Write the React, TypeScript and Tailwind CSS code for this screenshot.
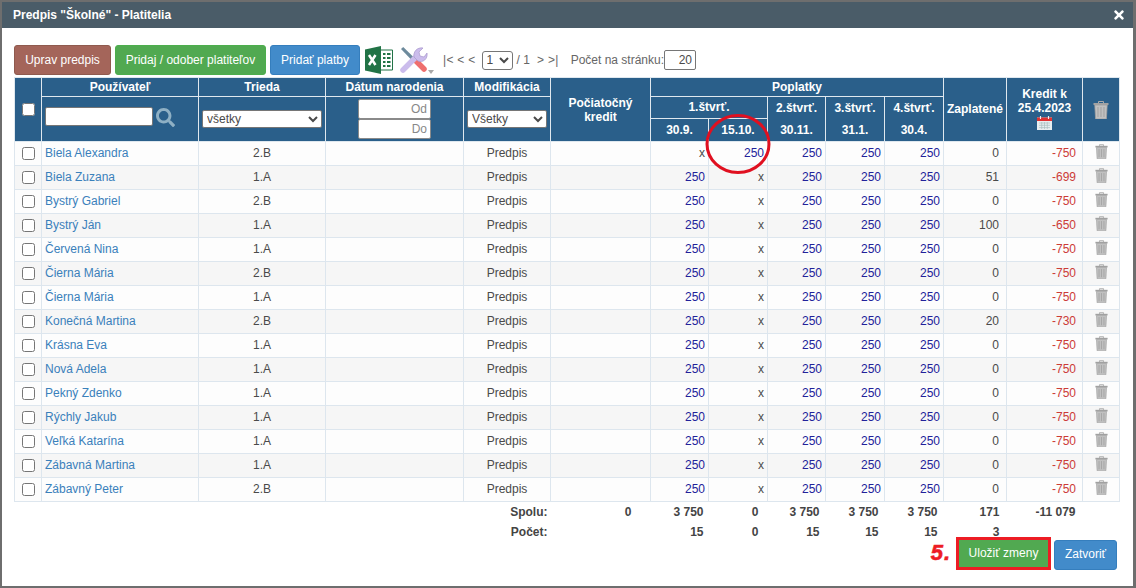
import { FaSearch, FaTimes } from "react-icons/fa";

const rows = [
  { name: "Biela Alexandra", cls: "2.B", paid: "0", credit: "-750", swap: true },
  { name: "Biela Zuzana", cls: "1.A", paid: "51", credit: "-699" },
  { name: "Bystrý Gabriel", cls: "2.B", paid: "0", credit: "-750" },
  { name: "Bystrý Ján", cls: "1.A", paid: "100", credit: "-650" },
  { name: "Červená Nina", cls: "1.A", paid: "0", credit: "-750" },
  { name: "Čierna Mária", cls: "2.B", paid: "0", credit: "-750" },
  { name: "Čierna Mária", cls: "1.A", paid: "0", credit: "-750" },
  { name: "Konečná Martina", cls: "2.B", paid: "20", credit: "-730" },
  { name: "Krásna Eva", cls: "1.A", paid: "0", credit: "-750" },
  { name: "Nová Adela", cls: "1.A", paid: "0", credit: "-750" },
  { name: "Pekný Zdenko", cls: "1.A", paid: "0", credit: "-750" },
  { name: "Rýchly Jakub", cls: "1.A", paid: "0", credit: "-750" },
  { name: "Veľká Katarína", cls: "1.A", paid: "0", credit: "-750" },
  { name: "Zábavná Martina", cls: "1.A", paid: "0", credit: "-750" },
  { name: "Zábavný Peter", cls: "2.B", paid: "0", credit: "-750" },
];

const colWidths = [27, 157, 127, 138, 87, 100, 58, 59, 58, 59, 59, 63, 76, 37];

const TrashIcon = ({ className }: { className: string }) => (
  <svg viewBox="0 0 16 18" className={className}>
    <path d="M5.5 0.5h5v2h-5z" fill="none" stroke="#aaa" />
    <rect x="0.5" y="2" width="15" height="2" fill="#a2a2a2" />
    <path d="M1.8 4h12.4l-0.8 14H2.6z" fill="#c0c0c0" />
    <path d="M1.8 4h12.4l-0.8 14H2.6z" fill="none" stroke="#a0a0a0" strokeWidth="0.8" />
    <path d="M5 6v10M8 6v10M11 6v10" stroke="#a4a4a4" strokeWidth="1.1" />
  </svg>
);

const CalendarIcon = () => (
  <svg viewBox="0 0 15 14" className="w-[15px] h-[14px]">
    <rect x="0" y="1.5" width="15" height="12.5" fill="#e8eef0" />
    <rect x="0" y="1.5" width="15" height="3.5" fill="#e03131" />
    <path d="M3.5 0v3M11.5 0v3" stroke="#f3f3f3" strokeWidth="1.1" />
    <path d="M2 7h11M2 9.3h11M2 11.6h11M4.7 6v7M7.5 6v7M10.3 6v7" stroke="#a9c0c0" strokeWidth="0.7" />
  </svg>
);

const ExcelIcon = () => (
  <svg viewBox="0 0 28 28" className="w-[28px] h-[28px]">
    <path d="M13 4h14.5v20H13z" fill="#fff" stroke="#217346" strokeWidth="1" />
    <path d="M18 8h2.5M22 8h3.5M18 12h2.5M22 12h3.5M18 16h2.5M22 16h3.5M18 20h2.5M22 20h3.5" stroke="#217346" strokeWidth="1.8" />
    <path d="M0 3.5 16 0v28L0 24.5z" fill="#217346" />
    <path d="M4 9l6.5 10M10.5 9 4 19" stroke="#fff" strokeWidth="2.5" />
  </svg>
);

const ToolsIcon = () => (
  <svg viewBox="0 0 35 29" className="w-[35px] h-[29px]">
    <path d="M2 3l2.2-2L16 12.5l-2.5 2.5z" fill="#6d8a9c" />
    <path d="M16 14l9 9" stroke="#ee6f6e" strokeWidth="5.5" strokeLinecap="round" />
    <path d="M4 24 17 11" stroke="#cbbcec" strokeWidth="5.5" strokeLinecap="round" />
    <path d="M15 11c-1-5 3-10 9-9l-4 4 1 4 4 1 3-4c1 6-4 10-9 8z" fill="#cbbcec" stroke="#a796cb" strokeWidth="0.7" />
    <path d="M29 24h6l-3 4z" fill="#a8a8a8" />
  </svg>
);

const headCell = "border border-[#dfe8ef] font-bold text-white text-center p-0 align-middle";
const cell = "border border-[#dde6ee] p-0 align-middle";
const blue = "text-[#22229a]";

export default function App() {
  return (
    <div className="relative w-[1136px] h-[588px] overflow-hidden bg-[#6e6e6e] pt-[2px] pb-[2px] pl-[2px] pr-[3px] text-[12px] leading-[17px] text-[#4a4a4a] font-['Liberation_Sans',Arial,sans-serif]">
      <div className="h-full flex flex-col bg-white">
        <div className="h-[26px] shrink-0 flex items-center justify-between pl-[11px] pr-[7px] bg-[#4a5c68] text-white font-bold">
          <span>Predpis "Školné" - Platitelia</span>
          <FaTimes className="w-[14px] h-[14px]" />
        </div>

        <div className="pt-[17px] pl-[12px] pr-[14px]">
          <div className="flex items-center h-[30px]">
            <button className="h-[30px] w-[97px] rounded-[3px] border border-[#8f5a4e] bg-[#a4655a] text-white">Uprav predpis</button>
            <button className="ml-[4px] h-[30px] w-[151px] rounded-[3px] border border-[#4cae4c] bg-[#51a951] text-white">Pridaj / odober platiteľov</button>
            <button className="ml-[4px] h-[30px] w-[90px] rounded-[3px] border border-[#357ebd] bg-[#428bca] text-white">Pridať platby</button>
            <span className="ml-[5px]"><ExcelIcon /></span>
            <span className="ml-[6px]"><ToolsIcon /></span>
            <span className="ml-[9px] text-[#666] tracking-[0.3px]">|&lt; &lt; &lt;</span>
            <select className="ml-[6px] w-[31px] h-[19px] bg-white border border-[#767676] rounded-[3px] text-[12px]">
              <option>1</option>
            </select>
            <span className="ml-[4px] text-[#666]">/ 1</span>
            <span className="ml-[7px] text-[#666] tracking-[0.3px]">&gt; &gt;|</span>
            <span className="ml-[12px] text-[#666]">Počet na stránku:</span>
            <input readOnly value="20" className="w-[32px] h-[20px] border border-[#767676] rounded-[2px] text-right pr-[3px] text-[12px]" />
          </div>

          <table className="mt-[2px] w-[1105px] table-fixed border-collapse">
            <colgroup>
              {colWidths.map((w, i) => (
                <col key={i} style={{ width: w }} />
              ))}
            </colgroup>
            <thead className="bg-[#2a5f8a]">
              <tr className="h-[19px]">
                <th rowSpan={3} className={headCell}>
                  <input type="checkbox" className="block mx-auto" />
                </th>
                <th className={headCell}>Používateľ</th>
                <th className={headCell}>Trieda</th>
                <th className={headCell}>Dátum narodenia</th>
                <th className={headCell}>Modifikácia</th>
                <th rowSpan={3} className={headCell}><div className="leading-[14px]">Počiatočný<br />kredit</div></th>
                <th colSpan={5} className={headCell}>Poplatky</th>
                <th rowSpan={3} className={headCell}>Zaplatené</th>
                <th rowSpan={3} className={headCell}>
                  <div className="leading-[14px]">Kredit k<br />25.4.2023</div>
                  <div className="flex justify-center mt-[1px] mb-[3px]"><CalendarIcon /></div>
                </th>
                <th rowSpan={3} className={headCell}>
                  <TrashIcon className="block mx-auto w-[16px] h-[18px]" />
                </th>
              </tr>
              <tr className="h-[22px]">
                <th rowSpan={2} className={headCell}>
                  <div className="flex items-center pl-[3px] mb-[6px]">
                    <input className="w-[108px] h-[19px] bg-white border border-[#767676] rounded-[2px]" />
                    <FaSearch className="ml-[3px] w-[19px] h-[19px] mt-[3px] text-[#8fb0c4]" />
                  </div>
                </th>
                <th rowSpan={2} className={headCell}>
                  <select className="w-[120px] h-[18px] bg-white border border-[#767676] rounded-[2px] text-[12px] font-normal text-[#4a4a4a]">
                    <option>všetky</option>
                  </select>
                </th>
                <th rowSpan={2} className={headCell}>
                  <div className="flex flex-col items-center">
                    <input readOnly placeholder="Od" className="w-[73px] h-[20px] bg-white border border-[#8a8a8a] text-right pr-[3px] rounded-[2px] text-[12px] font-normal placeholder:text-[#888]" />
                    <input readOnly placeholder="Do" className="w-[73px] h-[20px] bg-white border border-[#8a8a8a] text-right pr-[3px] rounded-[2px] text-[12px] font-normal placeholder:text-[#888]" />
                  </div>
                </th>
                <th rowSpan={2} className={headCell}>
                  <select className="w-[80px] h-[18px] bg-white border border-[#767676] rounded-[2px] text-[12px] font-normal text-[#4a4a4a]">
                    <option>Všetky</option>
                  </select>
                </th>
                <th colSpan={2} className={headCell}>1.štvrť.</th>
                <th rowSpan={2} className={headCell}><div className="leading-[22px]">2.štvrť.<br />30.11.</div></th>
                <th rowSpan={2} className={headCell}><div className="leading-[22px]">3.štvrť.<br />31.1.</div></th>
                <th rowSpan={2} className={headCell}><div className="leading-[22px]">4.štvrť.<br />30.4.</div></th>
              </tr>
              <tr className="h-[23px]">
                <th className={headCell}>30.9.</th>
                <th className={headCell}>15.10.</th>
              </tr>
            </thead>
            <tbody>
              {rows.map((r, i) => (
                <tr key={i} className={`h-[24px] ${i % 2 === 0 ? "bg-[#fdfdfd]" : "bg-[#f6f6f6]"}`}>
                  <td className={cell}><input type="checkbox" className="block mx-auto" /></td>
                  <td className={`${cell} pl-[3px] text-[#3a80bb]`}>{r.name}</td>
                  <td className={`${cell} text-center`}>{r.cls}</td>
                  <td className={cell} />
                  <td className={`${cell} text-center`}>Predpis</td>
                  <td className={cell} />
                  <td className={`${cell} text-right pr-[3px] ${r.swap ? "" : blue}`}>{r.swap ? "x" : "250"}</td>
                  <td className={`${cell} text-right pr-[3px] ${r.swap ? blue : ""}`}>{r.swap ? "250" : "x"}</td>
                  <td className={`${cell} text-right pr-[3px] ${blue}`}>250</td>
                  <td className={`${cell} text-right pr-[3px] ${blue}`}>250</td>
                  <td className={`${cell} text-right pr-[3px] ${blue}`}>250</td>
                  <td className={`${cell} text-right pr-[7px]`}>{r.paid}</td>
                  <td className={`${cell} text-right pr-[6px] text-[#cc3b37]`}>{r.credit}</td>
                  <td className={cell}><TrashIcon className="block mx-auto mb-[5px] w-[13px] h-[15px]" /></td>
                </tr>
              ))}
            </tbody>
            <tfoot className="font-bold text-[#444] [&_td]:pt-[2px]">
              <tr className="h-[20px]">
                <td colSpan={5} className="text-right pr-[3px]">Spolu:</td>
                <td className="text-right pr-[19px]">0</td>
                <td className="text-right pr-[5px]">3 750</td>
                <td className="text-right pr-[9px]">0</td>
                <td className="text-right pr-[6px]">3 750</td>
                <td className="text-right pr-[6px]">3 750</td>
                <td className="text-right pr-[6px]">3 750</td>
                <td className="text-right pr-[7px]">171</td>
                <td className="text-right pr-[7px]">-11 079</td>
                <td />
              </tr>
              <tr className="h-[20px]">
                <td colSpan={5} className="text-right pr-[3px]">Počet:</td>
                <td />
                <td className="text-right pr-[5px]">15</td>
                <td className="text-right pr-[9px]">0</td>
                <td className="text-right pr-[6px]">15</td>
                <td className="text-right pr-[6px]">15</td>
                <td className="text-right pr-[6px]">15</td>
                <td className="text-right pr-[7px]">3</td>
                <td colSpan={2} />
              </tr>
            </tfoot>
          </table>

          <div className="mt-[-5px] flex items-end justify-end pr-[2px]">
            <span className="mr-[5px] mb-[3px] text-[22px] leading-[28px] font-bold italic tracking-[1px] text-[#ed1c24] [-webkit-text-stroke:0.6px_#ed1c24]">5.</span>
            <button className="h-[33px] w-[95px] border-[3px] border-[#ed1c24] bg-[#51a951] text-white">Uložiť zmeny</button>
            <button className="ml-[3px] h-[30px] w-[63px] rounded-[3px] border border-[#357ebd] bg-[#428bca] text-white">Zatvoriť</button>
          </div>
        </div>
      </div>

      <svg viewBox="0 0 66 62" className="absolute left-[705px] top-[113px] w-[66px] h-[62px] pointer-events-none">
        <ellipse cx="33" cy="31" rx="31" ry="28.5" fill="none" stroke="#e01020" strokeWidth="3" />
      </svg>
    </div>
  );
}
